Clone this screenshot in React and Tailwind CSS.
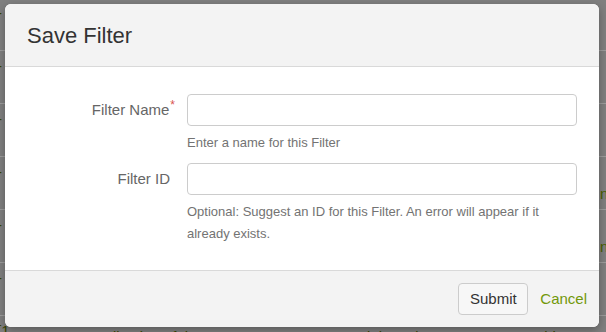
import React from "react";

const rows = [
  { a: "-", b: "", c: "", d: "", e: "" },
  { a: "-", b: "", c: "", d: "", e: "" },
  { a: "-", b: "", c: "", d: "", e: "" },
  { a: "-", b: "", c: "", d: "", e: "n" },
  { a: "-", b: "", c: "", d: "", e: "n" },
  { a: "-", b: "", c: "", d: "", e: "" },
  { a: "[1", b: "Normalization of the Syntax", c: "Aleksandr", d: "Matthias", e: "" },
];

const Backdrop = () => (
  <div className="-mt-[2px] flex flex-col">
    {rows.map((r, i) => (
      <div key={i} className="relative h-[53px] border-b border-[#9c9c9c] text-[15px] text-[#3a4500]">
        <span className="absolute -left-[3px] top-[4px]">{r.a}</span>
        <span className="absolute left-[68px] top-[10px]">{r.b}</span>
        <span className="absolute left-[357px] top-[10px]">{r.c}</span>
        <span className="absolute left-[515px] top-[10px]">{r.d}</span>
        <span className="absolute left-[600px] top-[26px] text-[#4b6100]">{r.e}</span>
      </div>
    ))}
  </div>
);

const SaveFilterModal = () => {
  return (
    <div className="absolute left-[5px] top-[4px] flex h-[323px] w-[594px] flex-col overflow-hidden rounded-md bg-white shadow-[0_3px_9px_rgba(0,0,0,0.3)]">
      <div className="flex h-[63px] items-center border-b border-[#d9d9d9] bg-[#f3f3f3] px-[22px]">
        <h4 className="text-[22px] text-[#333]">Save Filter</h4>
      </div>

      <form className="flex flex-1 flex-col pl-[22px] pr-[22px] pt-[27px]">
        <div className="flex">
          <label className="w-[160px] pt-[5px] pr-[12px] text-right text-[15px] text-[#666]">
            Filter Name<span className="relative -top-[6px] ml-[1px] text-[12px] text-[#d9534f]">*</span>
          </label>
          <div className="flex-1">
            <input type="text" className="block h-[32px] w-full rounded-[4px] border border-[#ccc] px-3 text-[15px]" />
            <p className="mt-[8px] text-[13px] leading-[18px] text-[#737373]">Enter a name for this Filter</p>
          </div>
        </div>

        <div className="mt-[11px] flex">
          <label className="w-[160px] pt-[5px] pr-[17px] text-right text-[15px] text-[#666]">Filter ID</label>
          <div className="flex-1">
            <input type="text" className="block h-[32px] w-full rounded-[4px] border border-[#ccc] px-3 text-[15px]" />
            <p className="mt-[6px] pr-[12px] text-[13px] leading-[22px] text-[#737373]">
              Optional: Suggest an ID for this Filter. An error will appear if it already exists.
            </p>
          </div>
        </div>
      </form>

      <div className="flex h-[57px] items-center justify-end gap-[12px] border-t border-[#d9d9d9] bg-[#f3f3f3] pr-[12px]">
        <button className="h-[32px] w-[70px] rounded-[4px] border border-[#ccc] bg-[#f7f7f7] text-[15px] text-[#333]">
          Submit
        </button>
        <a href="#" className="text-[15px] text-[#72980a]">Cancel</a>
      </div>
    </div>
  );
};

export default function App() {
  return (
    <div className="relative h-[332px] w-[606px] overflow-hidden bg-[#7f7f7f] font-['Liberation_Sans',Arial,sans-serif]">
      <Backdrop />
      <SaveFilterModal />
    </div>
  );
}
